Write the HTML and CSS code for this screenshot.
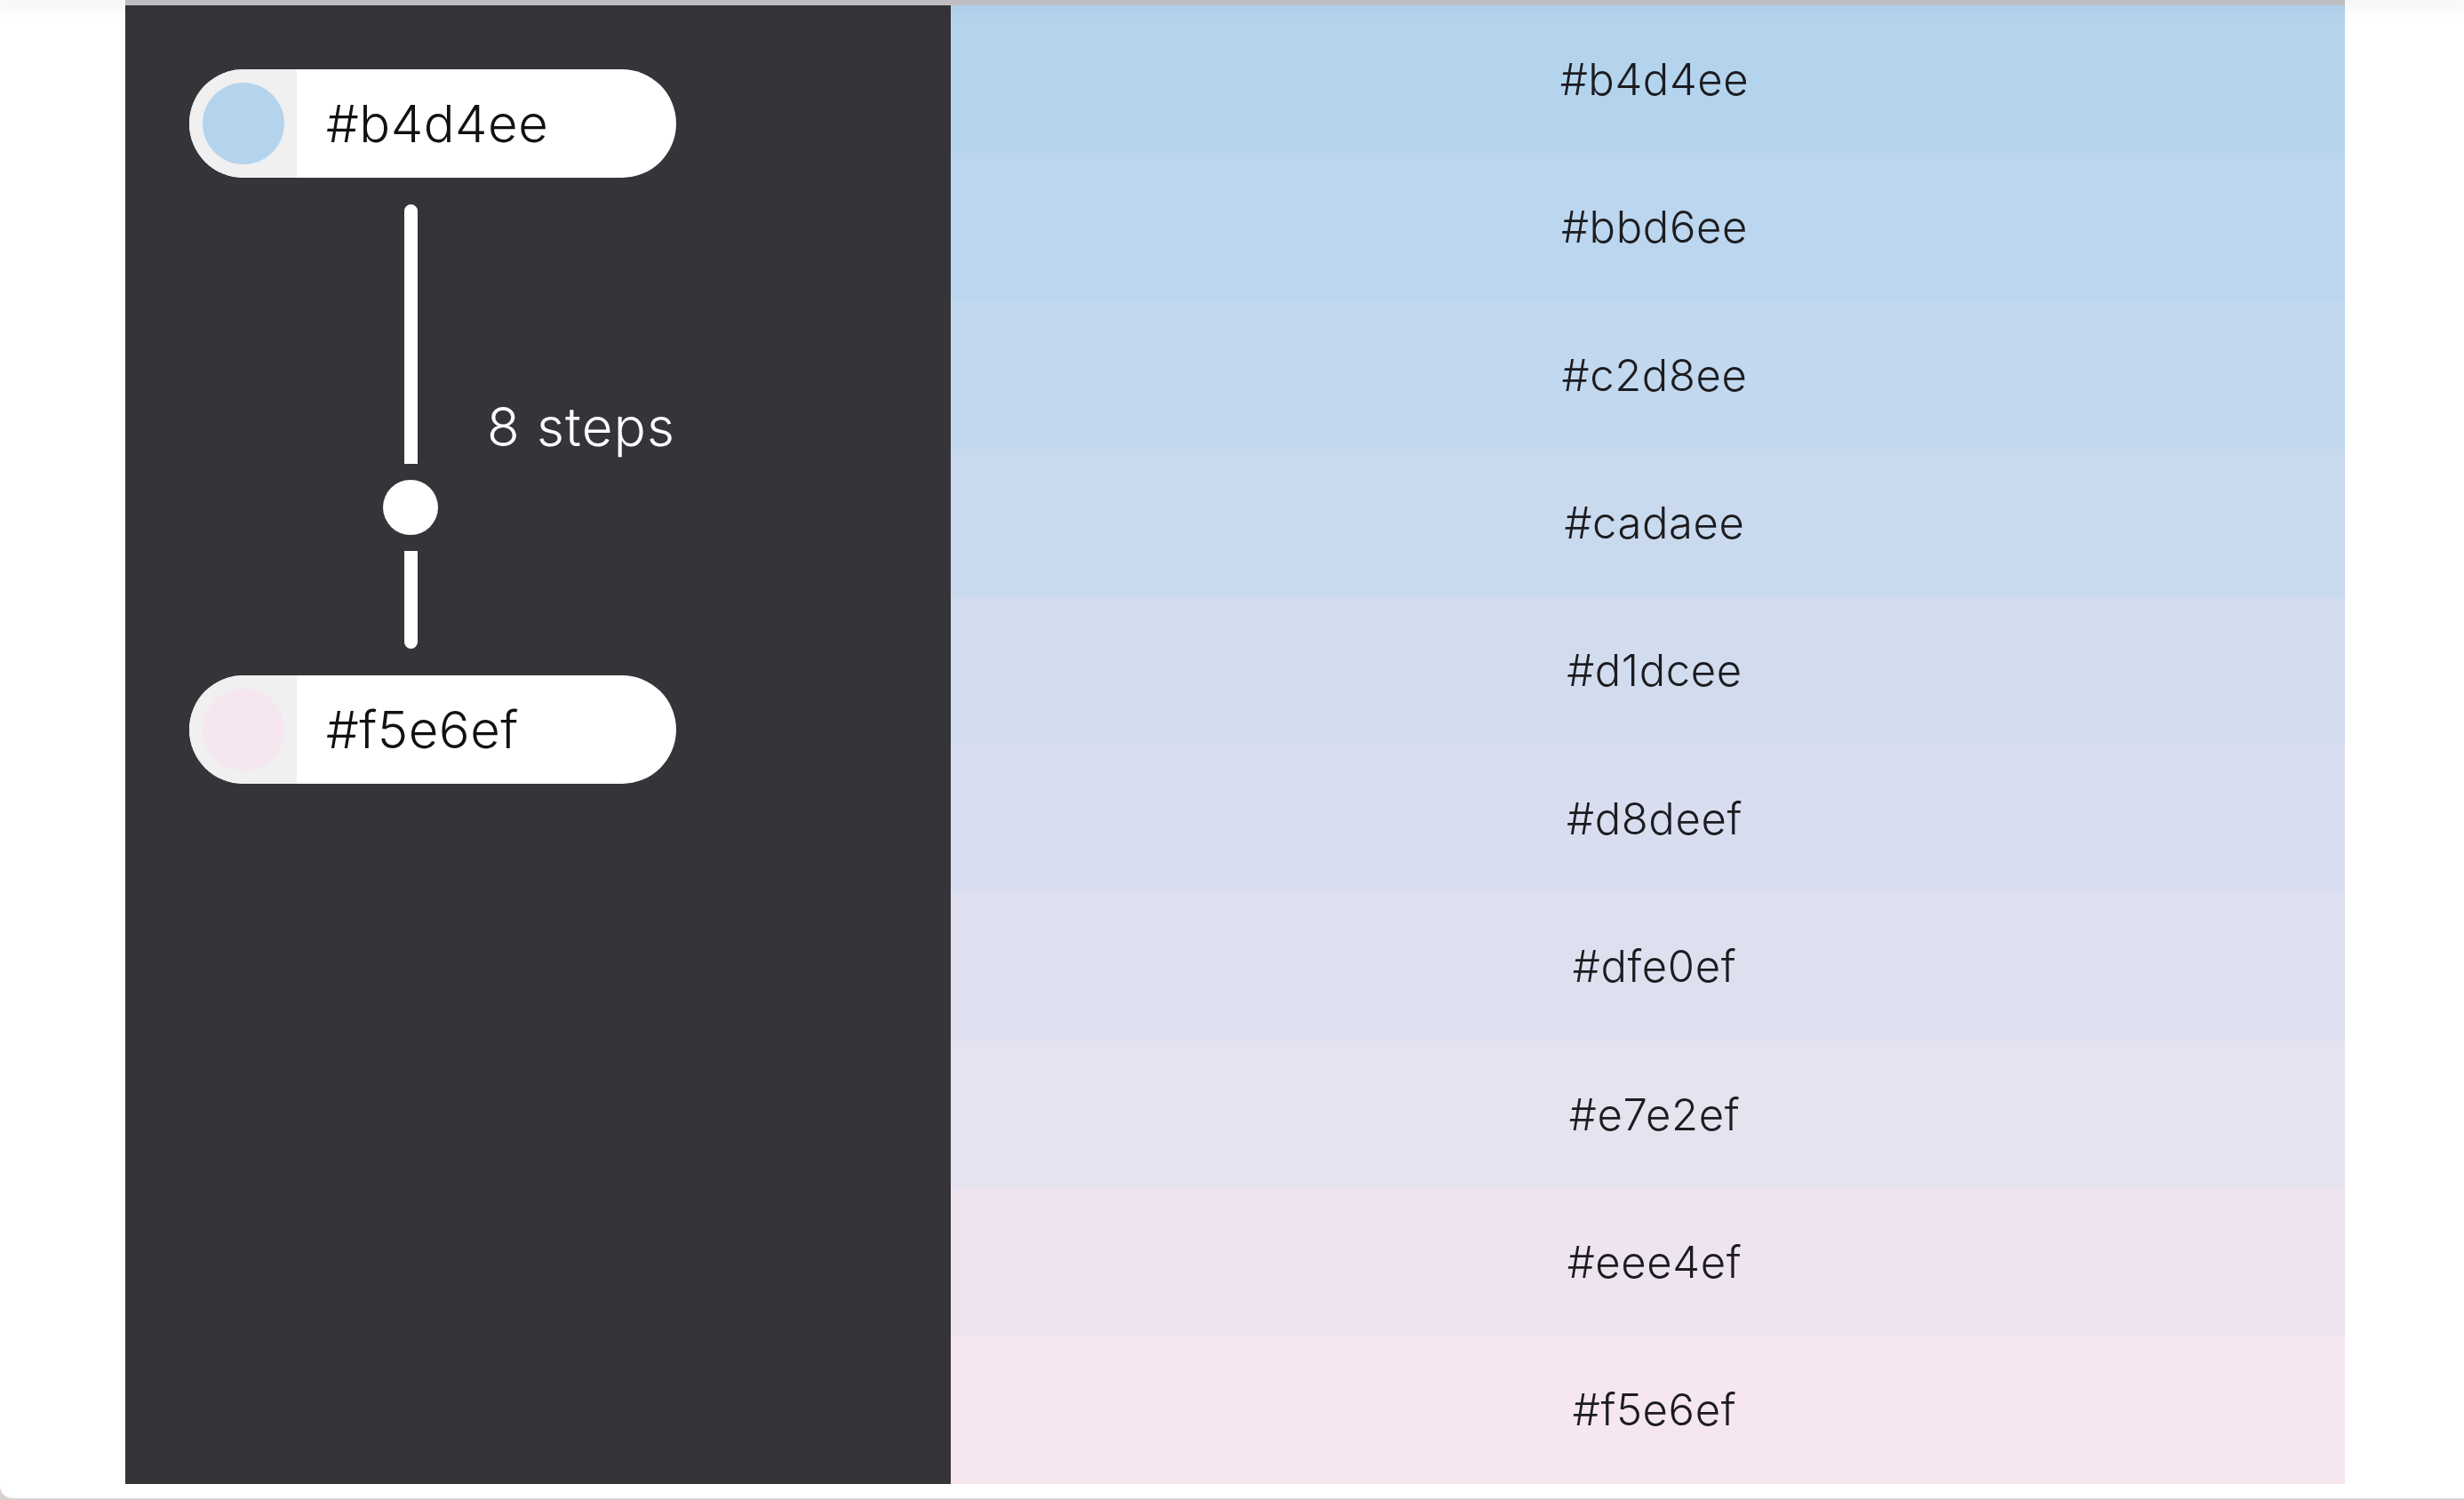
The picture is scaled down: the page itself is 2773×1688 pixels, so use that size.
FILE: index.html
```html
<!DOCTYPE html>
<html lang="en">
<head>
<meta charset="utf-8">
<title>Color steps</title>
<link rel="stylesheet" href="styles.css">
</head>
<body>
<div class="page">
  <div class="top-shadow"></div>
  <main class="main">
    <section class="controls">
      <div class="pill">
        <div class="pill-swatch"><span class="dot" style="background:#b4d4ee"></span></div>
        <span class="pill-text">#b4d4ee</span>
      </div>
      <div class="slider-row">
        <div class="slider">
          <span class="track track-top"></span>
          <span class="thumb"></span>
          <span class="track track-bottom"></span>
        </div>
        <span class="steps">8 steps</span>
      </div>
      <div class="pill">
        <div class="pill-swatch"><span class="dot" style="background:#f5e6ef"></span></div>
        <span class="pill-text">#f5e6ef</span>
      </div>
    </section>
    <section class="scale">
      <div class="row" style="background:#b4d4ee"><span class="label">#b4d4ee</span></div>
      <div class="row" style="background:#bbd6ee"><span class="label">#bbd6ee</span></div>
      <div class="row" style="background:#c2d8ee"><span class="label">#c2d8ee</span></div>
      <div class="row" style="background:#cadaee"><span class="label">#cadaee</span></div>
      <div class="row" style="background:#d1dcee"><span class="label">#d1dcee</span></div>
      <div class="row" style="background:#d8deef"><span class="label">#d8deef</span></div>
      <div class="row" style="background:#dfe0ef"><span class="label">#dfe0ef</span></div>
      <div class="row" style="background:#e7e2ef"><span class="label">#e7e2ef</span></div>
      <div class="row" style="background:#eee4ef"><span class="label">#eee4ef</span></div>
      <div class="row" style="background:#f5e6ef"><span class="label">#f5e6ef</span></div>
    </section>
  </main>
</div>
</body>
</html>
```

FILE: styles.css
```css
* { box-sizing: border-box; }

html, body {
  margin: 0;
  padding: 0;
}

body {
  background: #dccfcf;
  font-family: Inter, "Open Sans", "Liberation Sans", sans-serif;
  font-weight: 300;
  height: 1688px;
  overflow: hidden;
}

.page {
  position: relative;
  background: #ffffff;
  height: 1686px;
  border-bottom-left-radius: 14px;
  overflow: hidden;
}

.top-shadow {
  position: absolute;
  top: 0;
  left: 0;
  right: 0;
  height: 0;
  box-shadow: 0 0 20px 2px rgba(40, 40, 60, 0.22);
  z-index: 2;
}

.main {
  display: flex;
  margin-left: 141px;
  width: 2498px;
  height: 1670px;
  border-top: 6px solid #c5c4c9;
}

.controls {
  width: 929px;
  background: #353439;
  padding: 72px;
  display: flex;
  flex-direction: column;
  align-items: flex-start;
}

.pill {
  display: flex;
  align-items: center;
  width: 548px;
  height: 122px;
  border-radius: 61px;
  background: #ffffff;
  overflow: hidden;
}

.pill-swatch {
  width: 121px;
  height: 122px;
  background: #f0f0f0;
  display: flex;
  align-items: center;
  justify-content: center;
}

.dot {
  width: 92px;
  height: 92px;
  border-radius: 50%;
}

.pill-text {
  margin-left: 33px;
  font-size: 58px;
  color: #111111;
  letter-spacing: 0.5px;
}

.slider-row {
  display: flex;
  align-items: center;
  margin: 30px 0 30px 218px;
}

.slider {
  width: 62px;
  display: flex;
  flex-direction: column;
  align-items: center;
}

.track {
  display: block;
  width: 15px;
  background: #ffffff;
}

.track-top {
  height: 292px;
  border-radius: 8px 8px 0 0;
}

.track-bottom {
  height: 110px;
  border-radius: 0 0 8px 8px;
}

.thumb {
  display: block;
  width: 62px;
  height: 62px;
  border-radius: 50%;
  background: #ffffff;
  margin: 18px 0;
}

.steps {
  margin-left: 55px;
  color: #ffffff;
  font-size: 60px;
  letter-spacing: 1.2px;
}

.scale {
  flex: 1;
  display: flex;
  flex-direction: column;
}

.row {
  flex: 1;
  display: flex;
  align-items: center;
  justify-content: center;
  padding-left: 15px;
}

.label {
  font-size: 49px;
  color: #1c1c20;
  letter-spacing: 0.6px;
}
```
